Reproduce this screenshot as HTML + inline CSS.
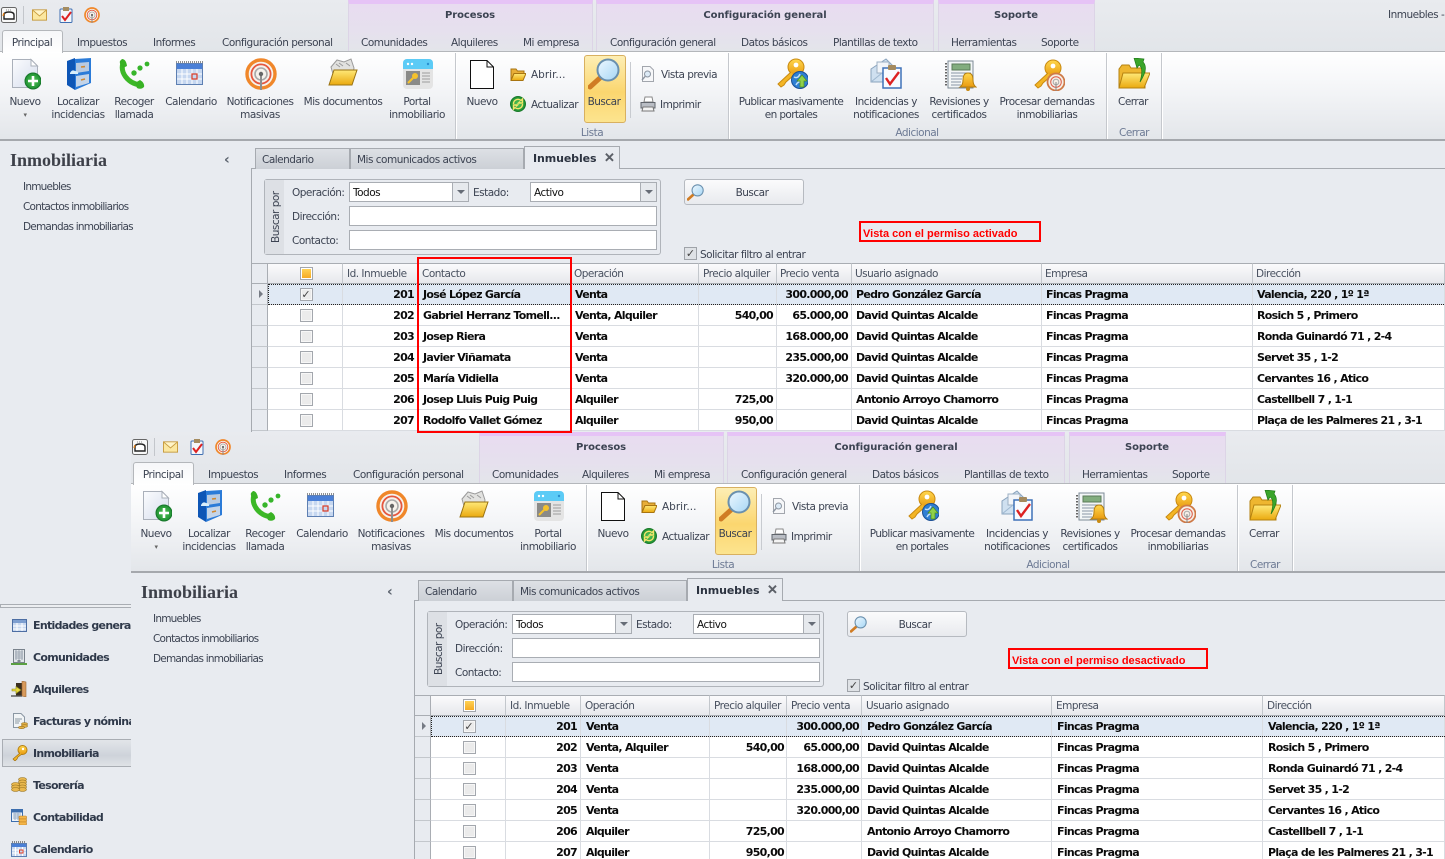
<!DOCTYPE html>
<html lang="es"><head><meta charset="utf-8"><title>Inmuebles</title>
<style>
html,body{margin:0;padding:0;width:1445px;height:859px;overflow:hidden;background:#e8ebf0}
body{position:relative;font:10.5px/14px "DejaVu Sans","Liberation Sans",sans-serif;letter-spacing:-.5px;color:#3c4352}
.w{position:absolute;overflow:hidden;background:#e8ebf0}
.t{position:absolute;white-space:nowrap;margin-top:3px}
.m{transform:translateX(-50%);text-align:center}
.g{font-weight:bold;font-size:10px;letter-spacing:-.08px}
.lk{letter-spacing:-.78px}
.tb{font-weight:bold;font-size:11px;letter-spacing:-.1px;color:#2c3340;z-index:3}
.cl{font-size:13px;font-weight:bold;-webkit-text-stroke:.6px #5c6068;color:#5c6068;z-index:3;letter-spacing:0}
.ch{font:bold 14px/14px "DejaVu Sans",sans-serif;color:#5e6570;letter-spacing:0}
svg.i{position:absolute;overflow:visible}
.bar{position:absolute;left:0;top:0;width:1445px;height:52px;background:linear-gradient(#e9ebef,#e2e5e9)}
.grp{position:absolute;top:0;height:51px;box-sizing:border-box;border-left:1px solid #dcd4e6;border-right:1px solid #dcd4e6;border-top:4px solid #e6c3f6;background:linear-gradient(#e8dcf0,#e6e0ee 55%,#e3e5ea)}
.rb{position:absolute;left:0;top:51px;width:1445px;height:90px;box-sizing:border-box;border-top:1px solid #b4b7bb;border-bottom:2px solid #a5a8ad;background:linear-gradient(#fff,#f6f7f9 35%,#e3e6ea)}
.sel{position:absolute;left:2px;top:30px;width:61px;height:23px;box-sizing:border-box;background:linear-gradient(#f6f7f9,#fff);border:1px solid #b4b7bb;border-bottom:0;border-radius:3px 3px 0 0}
.sep{position:absolute;top:53px;width:1px;height:86px;background:#c5c8cd;box-shadow:1px 0 0 #fff}
.hot{position:absolute;left:584px;top:55px;width:42px;height:68px;box-sizing:border-box;border:1px solid #d8b060;border-radius:3px;background:linear-gradient(#fdeeb4,#fbd66f 55%,#fce48f)}
.gl{color:#6d7a94}
.tab{position:absolute;top:148px;height:21px;box-sizing:border-box;border:1px solid #a6aab0;border-bottom:0;background:linear-gradient(#dde0e5,#ccd0d6)}
.tabs{position:absolute;left:524px;top:146px;width:96px;height:23px;box-sizing:border-box;border:1px solid #a6aab0;border-bottom:0;background:#e8ebf0;z-index:2}
.hl{position:absolute;left:252px;top:168px;width:1400px;height:1px;background:#a6aab0}
.vl{position:absolute;left:251px;top:168px;width:1px;height:300px;background:#a6aab0}
.gb{position:absolute;left:264px;top:179px;width:397px;height:76px;box-sizing:border-box;border:1px solid #b0b4ba;border-radius:3px;background:#e8ebf0}
.gs{position:absolute;left:0;top:0;width:19px;height:74px;background:#dde0e5}
.vt{position:absolute;left:270px;top:180px;height:75px;width:12px;line-height:12px;writing-mode:vertical-rl;transform:rotate(180deg);text-align:center;white-space:nowrap}
.in{position:absolute;box-sizing:border-box;height:20px;background:#fff;border:1px solid #a9adb3;padding:3px 3px 0;line-height:14px;color:#111}
.ar{position:absolute;top:182px;width:17px;height:20px;box-sizing:border-box;border:1px solid #a9adb3;background:#e6e9ed}
.ar:after{content:"";position:absolute;left:4px;top:7px;border:4px solid transparent;border-top:4px solid #666c76;border-bottom:0}
.btn{position:absolute;left:684px;top:179px;width:120px;height:26px;box-sizing:border-box;border:1px solid #b6bac0;border-radius:3px;background:linear-gradient(#fbfbfc,#e8eaee)}
.red{position:absolute;box-sizing:border-box;border:2px solid #f00;background:transparent;font:bold 11px/16px "Liberation Sans",sans-serif;letter-spacing:0;color:#f00;padding:3px 0 0 2px;white-space:nowrap}
.cb{position:absolute;left:684px;top:247px;width:13px;height:13px;box-sizing:border-box;border:1px solid #9fa3a9;background:#dfe2e6;color:#444;font:bold 11px/11px "DejaVu Sans",sans-serif;letter-spacing:0;text-align:center}
table{position:absolute;left:252px;top:263px;border-collapse:separate;border-spacing:0;table-layout:fixed;background:#fff;font:bold 11px/14px "DejaVu Sans",sans-serif;color:#0a0a0a;letter-spacing:-.7px}
th,td{box-sizing:border-box;height:21px;padding:2px 4px 0;border-right:1px solid #d9dce1;border-bottom:1px solid #d9dce1;overflow:hidden;white-space:nowrap;text-align:left}
th{font-weight:normal;font-size:10.5px;letter-spacing:-.5px;color:#48505f;padding-left:3px;padding-top:0;background:linear-gradient(#fbfbfc,#e6e8ec);border-top:1px solid #a9adb3;border-bottom:1px solid #a9adb3;border-right-color:#c3c7cc}
td.r{text-align:right;padding-right:3px}
td.x,th.x{background:#e8ebf0;border-right-color:#a9adb3;padding:0;border-bottom-color:#c3c7cc}
th.x{background:#e8ebf0;border-bottom-color:#a9adb3}
td.k{padding:0 0 0 2px;text-align:center}
th.k{padding:0 0 0 2px;text-align:center}
tr.s td{background:#e0e9f4}
tr.s td.x{background:#e8ebf0}
#t1 th:nth-child(3),#t1 th:nth-child(4),#t1 th:nth-child(6){padding-left:4px}
#t1 td:nth-child(4){padding-left:5px}
#t2 th{padding-left:4px}
#t2 td{padding-left:5px}
#t2 td.r{padding-right:2px}
#t2 td:nth-child(3){padding-right:3px}
#t2 td.x{padding-left:0}
#t2 td.k,#t2 th.k{padding-left:2px}
.c{display:inline-block;box-sizing:border-box;width:13px;height:13px;border:1px solid #a3a7ad;background:#ebebeb;box-shadow:inset 0 0 0 1px #f7f7f7;vertical-align:middle;color:#444;font:bold 11px/11px "DejaVu Sans",sans-serif;letter-spacing:0}
.co{background:linear-gradient(#ffd65a,#f5a61e);box-shadow:inset 0 0 0 1px #fff}
.dot{position:absolute;left:268px;top:284px;width:1300px;height:21px;box-sizing:border-box;border:1px dotted #222}
.tri{position:absolute;left:259px;top:290px;border:4px solid transparent;border-left:4px solid #767b84;border-right:0}
.nav{font:bold 11px/14px "DejaVu Sans",sans-serif;letter-spacing:-.7px;color:#2f394a;margin-top:1px}
.ti{margin-top:0;font:bold 18px/20px "Liberation Serif",serif;letter-spacing:0;color:#3d4049}
</style></head><body>
<svg width="0" height="0" style="position:absolute"><defs>
<linearGradient id="gy" x1="0" y1="0" x2="0" y2="1"><stop offset="0" stop-color="#ffe978"/><stop offset="1" stop-color="#eaa90e"/></linearGradient>
<linearGradient id="gk" x1="0" y1="0" x2="0" y2="1"><stop offset="0" stop-color="#ffd84e"/><stop offset="1" stop-color="#e99a10"/></linearGradient>
<linearGradient id="gp" x1="0" y1="0" x2="1" y2="1"><stop offset="0" stop-color="#fbfcfe"/><stop offset="1" stop-color="#d5dcec"/></linearGradient>
<linearGradient id="gl" x1="0" y1="0" x2="1" y2="1"><stop offset="0" stop-color="#eef8ff"/><stop offset="1" stop-color="#a6d6f5"/></linearGradient>
<radialGradient id="gg"><stop offset="0" stop-color="#58c95c"/><stop offset="1" stop-color="#1d8f31"/></radialGradient>
<symbol id="new" viewBox="0 0 32 32"><path d="M3.5 1.5H22L28.5 8V29.5H3.5Z" fill="url(#gp)" stroke="#aab0ba"/><path d="M22 1.5V8H28.5Z" fill="#fff" stroke="#aab0ba"/><circle cx="24" cy="23" r="8" fill="url(#gg)" stroke="#17772b"/><path d="M24 18V28M19 23H29" stroke="#fff" stroke-width="2.6"/></symbol>
<symbol id="cab" viewBox="0 0 32 32"><path d="M5 3L13 0V32L5 27Z" fill="#0e56b6"/><path d="M13 1L29 0V25L13 32Z" fill="#2b7bd8"/><path d="M14 5L27 4V13L14 15Z" fill="#b9cbe2"/><path d="M14 18L27 16V25L14 29Z" fill="#c4d4e8"/><path d="M19 9L23 8.6M19 22L23 21" stroke="#d08830" stroke-width="1.6"/><path d="M8 15q2-4 5-2q4 0 3 3H8z" fill="#d8eefb"/></symbol>
<symbol id="ph" viewBox="0 0 32 32"><path d="M5 5C2 14 9 25 22 27" fill="none" stroke="#3cb827" stroke-width="5"/><path d="M4 1Q8 1 9 8L5 10Q1 6 2 3ZM17 25L22 22Q27 25 26 29Q23 32 19 30Z" fill="#38b224"/><circle cx="16" cy="15" r="2.7" fill="#37b52b"/><circle cx="22" cy="10" r="2.6" fill="#37b52b"/><circle cx="29" cy="6" r="2.4" fill="#37b52b"/></symbol>
<symbol id="cal" viewBox="0 0 32 32"><rect x="2.5" y="5.5" width="26" height="21" fill="#c6d7f0" stroke="#5d7fb2"/><rect x="3" y="6" width="25" height="5" fill="#4a7fd6"/><path d="M2 4H29" stroke="#222" stroke-dasharray="1 1"/><path d="M3 16H28M3 21H28M8 11V26M13 11V26M18 11V26M23 11V26" stroke="#fff"/><rect x="18" y="16" width="5" height="5" fill="none" stroke="#dc3b24" stroke-width="1.2"/></symbol>
<symbol id="not" viewBox="0 0 32 32"><circle cx="16" cy="16" r="14" fill="#f6f2ec" stroke="#f0872a" stroke-width="3.4"/><circle cx="16" cy="16" r="9.6" fill="none" stroke="#e5573f" stroke-width="1.8"/><circle cx="16" cy="16" r="6" fill="none" stroke="#a9a9a9" stroke-width="1.6"/><path d="M16 16V32" stroke="#8e8e8e" stroke-width="2"/><circle cx="16" cy="16" r="2.2" fill="#666"/></symbol>
<symbol id="doc" viewBox="0 0 32 32"><path d="M4 9L10 2L17 4L24 1L27 10L26 16H6Z" fill="#e2e2e0" stroke="#9a9a9a"/><path d="M9 6L13 9M12 5L16 8M19 5L23 8" stroke="#9a9a9a"/><path d="M7 12H30L25 27H2Z" fill="url(#gy)" stroke="#9a7312"/></symbol>
<symbol id="por" viewBox="0 0 32 32"><rect x="1" y="1" width="30" height="30" rx="4" fill="#e4e4e4"/><path d="M1 11V5a4 4 0 0 1 4-4H27a4 4 0 0 1 4 4V11Z" fill="#5ccbf6"/><circle cx="6" cy="6" r="1.2" fill="#fff"/><circle cx="10" cy="6" r="1.2" fill="#fff"/><circle cx="26" cy="6" r="1.2" fill="#2a8fcf"/><rect x="4" y="13" width="14" height="14" fill="#8a8a88"/><circle cx="13" cy="18" r="3" fill="#f5c22c"/><path d="M11 20L6 25" stroke="#f5c22c" stroke-width="2"/><path d="M20 15H28M20 18H28M20 21H28M20 24H28" stroke="#9c9c9c"/></symbol>
<symbol id="bla" viewBox="0 0 32 32"><path d="M4.5 2.5H21L27.5 9V30.5H4.5Z" fill="#fff" stroke="#111"/><path d="M21 2.5V9H27.5" fill="none" stroke="#111"/></symbol>
<symbol id="fld" viewBox="0 0 16 16"><path d="M1 3H6L7.5 5H14V8H4L1 14Z" fill="#e8ae38" stroke="#a87410"/><path d="M4 7.5H16L13 14.5H1Z" fill="url(#gy)" stroke="#a87410"/></symbol>
<symbol id="ref" viewBox="0 0 16 16"><circle cx="8" cy="8" r="7.5" fill="url(#gg)" stroke="#1a7a2a"/><path d="M3.5 8A4.5 4.5 0 0 1 11 4.5L12.5 3V7H8.5L10 5.5" fill="none" stroke="#f3e56a" stroke-width="1.4"/><path d="M12.5 8A4.5 4.5 0 0 1 5 11.5L3.5 13V9H7.5L6 10.5" fill="none" stroke="#f3e56a" stroke-width="1.4"/></symbol>
<symbol id="mag" viewBox="0 0 32 32"><path d="M13 19L2 29" stroke="#d07c24" stroke-width="5" stroke-linecap="round"/><circle cx="20" cy="12" r="10.5" fill="url(#gl)" stroke="#6a90ae" stroke-width="2"/></symbol>
<symbol id="pre" viewBox="0 0 16 16"><path d="M2.5.5H10L13.5 4V15.5H2.5Z" fill="#f6f7f9" stroke="#a2a6ad"/><circle cx="7.5" cy="8" r="3" fill="#dceaf6" stroke="#8b94a0"/><path d="M5 10.5L2 14" stroke="#8b94a0" stroke-width="1.4"/></symbol>
<symbol id="pri" viewBox="0 0 16 16"><path d="M5 1H12L13 6H4Z" fill="#fff" stroke="#888"/><path d="M1 6.5H15V12H1Z" fill="#b9bdc4" stroke="#60656c"/><path d="M3 11H13L14 15H2Z" fill="#f4f4f4" stroke="#777"/></symbol>
<symbol id="key" viewBox="0 0 32 32"><circle cx="20" cy="9" r="8" fill="url(#gk)" stroke="#c98a10"/><circle cx="20" cy="7" r="2.4" fill="#fff"/><path d="M15 14L2 26L5 29L8 27L10 24L18 17" fill="#f3b525" stroke="#c98a10"/></symbol>
<symbol id="keg" viewBox="0 0 32 32"><use href="#key"/><circle cx="24" cy="22" r="8.5" fill="#2f7fd3" stroke="#1b4f94"/><path d="M18 19q4 2 6-3M20 27q2-4 6-3" fill="none" stroke="#bfe0fa" stroke-width="1.5"/><path d="M26 17L31 23H28V29H24V23H21Z" fill="#8fd14a" stroke="#4b8d1c" stroke-width=".7"/></symbol>
<symbol id="ket" viewBox="0 0 32 32"><use href="#key"/><circle cx="23" cy="23" r="8.5" fill="#f5eee6" stroke="#ce7a48" stroke-width="1.8"/><circle cx="23" cy="23" r="5.3" fill="none" stroke="#dd5c48"/><circle cx="23" cy="23" r="2.8" fill="none" stroke="#a9a9a9"/><path d="M23 23V32" stroke="#888"/></symbol>
<symbol id="inc" viewBox="0 0 32 32"><path d="M1 11L16 1L23 8V24H1Z" fill="#cfe0f0" stroke="#8aa3bd"/><rect x="7" y="4" width="12" height="11" fill="#f2f5f9" stroke="#9cb0c4"/><path d="M1 24L12 15L22 24" fill="none" stroke="#9fb8d0"/><rect x="13" y="10" width="18" height="20" fill="#f8fbff" stroke="#3f72b8" stroke-width="1.5"/><rect x="18" y="7" width="8" height="5" rx="1" fill="#a48a5e"/><path d="M16 20L20 26L29 14" fill="none" stroke="#dd2222" stroke-width="2.4"/></symbol>
<symbol id="rev" viewBox="0 0 32 32"><rect x="3" y="1" width="25" height="27" fill="#f3f6f7" stroke="#7c8a96"/><path d="M1 3v23" stroke="#666" stroke-dasharray="1.5 1.5" stroke-width="2"/><rect x="7" y="4" width="18" height="6" fill="#82ad7e" stroke="#5b7b58"/><path d="M6 13H26M6 16H18M6 19H17M6 22H16M6 25H16" stroke="#8a97a6"/><path d="M23 13q5 0 5 7q0 5 3 7H15q3-2 3-7q0-7 5-7Z" fill="url(#gk)" stroke="#b57f10"/><circle cx="23" cy="29" r="2" fill="#c98a10"/></symbol>
<symbol id="cer" viewBox="0 0 32 32"><path d="M1 11L4 7H11L13 10H27V30H1Z" fill="#eeb630" stroke="#b58210"/><path d="M5 15H32L26 30H1Z" fill="url(#gy)" stroke="#b58210"/><path d="M16 0L26 1L25 4Q31 10 22 24Q26 10 21 7L19 10Z" fill="#3aa52a" stroke="#1e7a18" stroke-width=".7"/></symbol>
<symbol id="q1" viewBox="0 0 16 16"><rect x=".5" y=".5" width="15" height="15" rx="2" fill="#f8f8f8" stroke="#666"/><path d="M3 8Q3 5 8 5T13 8V12H3Z" fill="#fff" stroke="#222" stroke-width="1.4"/><path d="M3 6L2 9" stroke="#e0801a" stroke-width="1.4"/><path d="M5 3H11" stroke="#888" stroke-dasharray="1 1"/></symbol>
<symbol id="mai" viewBox="0 0 16 12"><rect x=".5" y=".5" width="15" height="11" fill="#fbe7a0" stroke="#c69a3e"/><path d="M1 1L8 7L15 1" fill="#fff4c8" stroke="#c69a3e"/></symbol>
<symbol id="clp" viewBox="0 0 14 16"><rect x="1" y="2" width="12" height="13.5" rx="1" fill="#f4f7fb" stroke="#3f6fb2"/><rect x="4" y="0" width="6" height="4" fill="#a58c60"/><path d="M3 9L6 13L12 5" fill="none" stroke="#dd2222" stroke-width="2"/></symbol>
<symbol id="s1" viewBox="0 0 16 16"><rect x=".5" y="2.5" width="14" height="12" fill="#c9d8ef" stroke="#4d6ea3"/><rect x="1" y="3" width="13" height="3" fill="#7e9fd0"/><path d="M1 9H14M1 12H14M5 6V14M10 6V14" stroke="#fff"/></symbol>
<symbol id="s2" viewBox="0 0 16 16"><rect x="2.5" y=".5" width="11" height="13" fill="#e2e6ea" stroke="#79828c"/><path d="M4 3H12M4 5H12M4 7H12M4 9H12M5 1V11M8 1V11M11 1V11" stroke="#9fa8b4"/><rect x="6.5" y="11" width="3" height="3" fill="#7f8890"/><path d="M0 15H16" stroke="#5a9f42" stroke-width="2"/></symbol>
<symbol id="s3" viewBox="0 0 16 16"><rect x="5" y="2" width="9" height="13" fill="#3a2e20"/><path d="M11 0L15 1V16L11 15Z" fill="#d89a5c" stroke="#9c6a38" stroke-width=".6"/><path d="M1 8H5V5.5L10 9L5 12.5V10H1Z" fill="#e8d93f" stroke="#8f8a1a" stroke-width=".6"/><path d="M0 15H11" stroke="#555" stroke-width="1.4"/></symbol>
<symbol id="s4" viewBox="0 0 16 16"><path d="M1.5.5H9L12.5 4V14.5H1.5Z" fill="#f1f4f6" stroke="#8b97a3"/><path d="M3 6H10M3 8H8M3 10H7" stroke="#8b97a3"/><ellipse cx="12.5" cy="11" rx="3" ry="1.3" fill="#e6b245" stroke="#9c7520" stroke-width=".6"/><ellipse cx="12.5" cy="13" rx="3" ry="1.3" fill="#e6b245" stroke="#9c7520" stroke-width=".6"/><ellipse cx="9.5" cy="14.5" rx="3" ry="1.2" fill="#e6b245" stroke="#9c7520" stroke-width=".6"/></symbol>
<symbol id="s5" viewBox="0 0 16 16"><circle cx="10.5" cy="5" r="4.5" fill="url(#gk)" stroke="#b57f10"/><circle cx="11" cy="4" r="1.2" fill="#fff"/><path d="M8 8L1 14L3 16L5 14L6 12L10 9" fill="#f3b525" stroke="#a06f10" stroke-width=".7"/></symbol>
<symbol id="s6" viewBox="0 0 16 16"><g fill="#e9b84e" stroke="#94701f" stroke-width=".6"><ellipse cx="11.5" cy="2.5" rx="4" ry="2"/><ellipse cx="11.5" cy="5" rx="4" ry="2"/><ellipse cx="11.5" cy="7.5" rx="4" ry="2"/><ellipse cx="11.5" cy="10" rx="4" ry="2"/><ellipse cx="11.5" cy="12.5" rx="4" ry="2"/><ellipse cx="4.5" cy="7.5" rx="4" ry="2"/><ellipse cx="4.5" cy="10" rx="4" ry="2"/><ellipse cx="4.5" cy="12.5" rx="4" ry="2"/></g></symbol>
<symbol id="s7" viewBox="0 0 16 16"><rect x=".5" y=".5" width="11" height="12" fill="#eef3f9" stroke="#3c6eae"/><rect x="1" y="1" width="10" height="2.5" fill="#3c6eae"/><path d="M2 5H10M2 7H10M2 9H10M4 4V11M7 4V11" stroke="#9cb0c8"/><rect x="8" y="7" width="7.5" height="3" rx="1" fill="#f4b64a" stroke="#c07d1c" stroke-width=".6"/><rect x="8" y="10" width="7.5" height="3" rx="1" fill="#f4b64a" stroke="#c07d1c" stroke-width=".6"/><rect x="8" y="13" width="7.5" height="3" rx="1" fill="#f4b64a" stroke="#c07d1c" stroke-width=".6"/></symbol>
<symbol id="s8" viewBox="0 0 16 16"><rect x=".5" y="2.5" width="15" height="13" fill="#c9d8ef" stroke="#5d7fb2"/><rect x="1" y="3" width="14" height="3" fill="#4a7fd6"/><path d="M1 1H15" stroke="#222" stroke-dasharray="1 1"/><path d="M1 9H15M1 12H15M4.5 6V15M8 6V15M11.5 6V15" stroke="#fff"/><rect x="8.5" y="9" width="3.5" height="3" fill="none" stroke="#dc3b24"/></symbol>
</defs></svg>

<!-- WINDOW 1 -->
<div class="w" style="left:0;top:0;width:1445px;height:432px">
<div class="bar"></div>
<div class="grp" style="left:348px;width:245px"></div><div class="grp" style="left:596px;width:338px"></div><div class="grp" style="left:938px;width:157px"></div>
<div class="t m g" style="left:470px;top:6px">Procesos</div><div class="t m g" style="left:765px;top:6px">Configuración general</div><div class="t m g" style="left:1016px;top:6px">Soporte</div>
<div class="t" style="left:1388px;top:5px">Inmuebles - Fincas</div>
<svg class="i" style="left:1px;top:7px;width:16px;height:16px"><use href="#q1"/></svg><div style="position:absolute;left:23px;top:6px;width:1px;height:18px;background:#c3c6cb"></div>
<svg class="i" style="left:32px;top:9px;width:15px;height:12px"><use href="#mai"/></svg><svg class="i" style="left:59px;top:7px;width:14px;height:16px"><use href="#clp"/></svg><svg class="i" style="left:84px;top:7px;width:16px;height:16px"><use href="#not"/></svg>
<div class="rb"></div><div class="sel"></div>
<div class="t m" style="left:32px;top:33px">Principal</div><div class="t" style="left:77px;top:33px">Impuestos</div><div class="t" style="left:153px;top:33px">Informes</div><div class="t" style="left:222px;top:33px">Configuración personal</div><div class="t" style="left:361px;top:33px">Comunidades</div><div class="t" style="left:451px;top:33px">Alquileres</div><div class="t" style="left:523px;top:33px">Mi empresa</div><div class="t" style="left:610px;top:33px">Configuración general</div><div class="t" style="left:741px;top:33px">Datos básicos</div><div class="t" style="left:833px;top:33px">Plantillas de texto</div><div class="t" style="left:951px;top:33px">Herramientas</div><div class="t" style="left:1041px;top:33px">Soporte</div>
<div class="sep" style="left:455px"></div><div class="sep" style="left:728px"></div><div class="sep" style="left:1106px"></div><div class="sep" style="left:1161px"></div>
<div class="hot"></div><div style="position:absolute;left:630px;top:62px;width:1px;height:56px;background:#c8cbd0"></div>
<svg class="i" style="left:9px;top:58px;width:32px;height:32px"><use href="#new"/></svg><svg class="i" style="left:62px;top:58px;width:32px;height:32px"><use href="#cab"/></svg><svg class="i" style="left:118px;top:58px;width:32px;height:32px"><use href="#ph"/></svg><svg class="i" style="left:174px;top:58px;width:32px;height:32px"><use href="#cal"/></svg><svg class="i" style="left:245px;top:58px;width:32px;height:32px"><use href="#not"/></svg><svg class="i" style="left:327px;top:58px;width:32px;height:32px"><use href="#doc"/></svg><svg class="i" style="left:402px;top:58px;width:32px;height:32px"><use href="#por"/></svg><svg class="i" style="left:466px;top:58px;width:32px;height:32px"><use href="#bla"/></svg>
<svg class="i" style="left:510px;top:66px;width:16px;height:16px"><use href="#fld"/></svg><svg class="i" style="left:510px;top:96px;width:16px;height:16px"><use href="#ref"/></svg><svg class="i" style="left:588px;top:58px;width:32px;height:32px"><use href="#mag"/></svg><svg class="i" style="left:640px;top:66px;width:16px;height:16px"><use href="#pre"/></svg><svg class="i" style="left:640px;top:96px;width:16px;height:16px"><use href="#pri"/></svg>
<svg class="i" style="left:776px;top:58px;width:32px;height:32px"><use href="#keg"/></svg><svg class="i" style="left:870px;top:58px;width:32px;height:32px"><use href="#inc"/></svg><svg class="i" style="left:945px;top:60px;width:32px;height:32px"><use href="#rev"/></svg><svg class="i" style="left:1033px;top:59px;width:32px;height:32px"><use href="#ket"/></svg><svg class="i" style="left:1118px;top:58px;width:32px;height:32px"><use href="#cer"/></svg>
<div class="t m" style="left:25px;top:92px">Nuevo</div><div class="t m" style="left:25px;top:105px;font-size:7px;color:#666">▾</div><div class="t m" style="left:78px;top:92px">Localizar<br><span style="position:relative;top:-1px">incidencias</span></div><div class="t m" style="left:134px;top:92px">Recoger<br><span style="position:relative;top:-1px">llamada</span></div><div class="t m" style="left:191px;top:92px">Calendario</div><div class="t m" style="left:260px;top:92px">Notificaciones<br><span style="position:relative;top:-1px">masivas</span></div><div class="t m" style="left:343px;top:92px">Mis documentos</div><div class="t m" style="left:417px;top:92px">Portal<br><span style="position:relative;top:-1px">inmobiliario</span></div>
<div class="t m" style="left:482px;top:92px">Nuevo</div><div class="t" style="left:531px;top:65px;letter-spacing:0">Abrir...</div><div class="t" style="left:531px;top:95px">Actualizar</div><div class="t m" style="left:604px;top:92px">Buscar</div><div class="t" style="left:661px;top:65px">Vista previa</div><div class="t" style="left:660px;top:95px">Imprimir</div><div class="t m gl" style="left:592px;top:123px">Lista</div>
<div class="t m" style="left:791px;top:92px;letter-spacing:-.62px">Publicar masivamente<br><span style="position:relative;top:-1px">en portales</span></div><div class="t m" style="left:886px;top:92px">Incidencias y<br><span style="position:relative;top:-1px">notificaciones</span></div><div class="t m" style="left:959px;top:92px">Revisiones y<br><span style="position:relative;top:-1px">certificados</span></div><div class="t m" style="left:1047px;top:92px">Procesar demandas<br><span style="position:relative;top:-1px">inmobiliarias</span></div><div class="t m gl" style="left:917px;top:123px">Adicional</div><div class="t m" style="left:1133px;top:92px">Cerrar</div><div class="t m gl" style="left:1134px;top:123px">Cerrar</div>
<div class="t ti" style="left:10px;top:150px">Inmobiliaria</div><div class="t ch" style="left:224px;top:150px">‹</div>
<div class="t lk" style="left:23px;top:177px">Inmuebles</div><div class="t lk" style="left:23px;top:197px">Contactos inmobiliarios</div><div class="t lk" style="left:23px;top:217px">Demandas inmobiliarias</div>

<div class="hl"></div><div class="vl"></div>
<div class="tab" style="left:255px;width:95px"></div><div class="tab" style="left:350px;width:174px"></div><div class="tabs"></div>
<div class="t" style="left:262px;top:150px">Calendario</div><div class="t" style="left:357px;top:150px">Mis comunicados activos</div><div class="t tb" style="left:533px;top:149px">Inmuebles</div><div class="t cl" style="left:604px;top:149px">✕</div>
<div class="gb"><div class="gs"></div></div><div class="vt">Buscar por</div>
<div class="t" style="left:292px;top:183px">Operación:</div><div class="t" style="left:292px;top:207px">Dirección:</div><div class="t" style="left:292px;top:231px">Contacto:</div><div class="t" style="left:473px;top:183px">Estado:</div>
<div class="in" style="left:349px;top:182px;width:104px">Todos</div><div class="ar" style="left:452px"></div><div class="in" style="left:530px;top:182px;width:111px">Activo</div><div class="ar" style="left:640px"></div>
<div class="in" style="left:349px;top:206px;width:308px"></div><div class="in" style="left:349px;top:230px;width:308px"></div>
<div class="btn"></div><svg class="i" style="left:687px;top:184px;width:17px;height:17px"><use href="#mag"/></svg><div class="t m" style="left:752px;top:183px">Buscar</div>
<div class="cb">✓</div><div class="t" style="left:700px;top:245px">Solicitar filtro al entrar</div>
<div class="red" style="left:859px;top:221px;width:182px;height:21px">Vista con el permiso activado</div>
<table id="t1" style="width:1193px"><colgroup><col style="width:16px"><col style="width:75px"><col style="width:75px"><col style="width:153px"><col style="width:128px"><col style="width:78px"><col style="width:75px"><col style="width:190px"><col style="width:211px"><col style="width:192px"></colgroup>
<tr><th class="x"></th><th class="k"><span class="c co"></span></th><th>Id. Inmueble</th><th>Contacto</th><th>Operación</th><th>Precio alquiler</th><th>Precio venta</th><th>Usuario asignado</th><th>Empresa</th><th>Dirección</th></tr>
<tr class="s"><td class="x"></td><td class="k"><span class="c">✓</span></td><td class="r">201</td><td>José López García</td><td>Venta</td><td class="r"></td><td class="r">300.000,00</td><td>Pedro González García</td><td>Fincas Pragma</td><td>Valencia, 220 , 1º 1ª</td></tr>
<tr><td class="x"></td><td class="k"><span class="c"></span></td><td class="r">202</td><td>Gabriel Herranz Tomell...</td><td>Venta, Alquiler</td><td class="r">540,00</td><td class="r">65.000,00</td><td>David Quintas Alcalde</td><td>Fincas Pragma</td><td>Rosich 5 , Primero</td></tr>
<tr><td class="x"></td><td class="k"><span class="c"></span></td><td class="r">203</td><td>Josep Riera</td><td>Venta</td><td class="r"></td><td class="r">168.000,00</td><td>David Quintas Alcalde</td><td>Fincas Pragma</td><td>Ronda Guinardó 71 , 2-4</td></tr>
<tr><td class="x"></td><td class="k"><span class="c"></span></td><td class="r">204</td><td>Javier Viñamata</td><td>Venta</td><td class="r"></td><td class="r">235.000,00</td><td>David Quintas Alcalde</td><td>Fincas Pragma</td><td>Servet 35 , 1-2</td></tr>
<tr><td class="x"></td><td class="k"><span class="c"></span></td><td class="r">205</td><td>María Vidiella</td><td>Venta</td><td class="r"></td><td class="r">320.000,00</td><td>David Quintas Alcalde</td><td>Fincas Pragma</td><td>Cervantes 16 , Atico</td></tr>
<tr><td class="x"></td><td class="k"><span class="c"></span></td><td class="r">206</td><td>Josep Lluis Puig Puig</td><td>Alquiler</td><td class="r">725,00</td><td class="r"></td><td>Antonio Arroyo Chamorro</td><td>Fincas Pragma</td><td>Castellbell 7 , 1-1</td></tr>
<tr><td class="x"></td><td class="k"><span class="c"></span></td><td class="r">207</td><td>Rodolfo Vallet Gómez</td><td>Alquiler</td><td class="r">950,00</td><td class="r"></td><td>David Quintas Alcalde</td><td>Fincas Pragma</td><td>Plaça de les Palmeres 21 , 3-1</td></tr>
</table>
<div class="dot"></div><div class="tri"></div>
</div>

<!-- LEFT NAV -->
<div style="position:absolute;left:0;top:432px;width:131px;height:427px;overflow:hidden;background:#e8ebf0">
<div style="position:absolute;left:0;top:172px;width:140px;height:4px;box-sizing:border-box;border:1px solid #a9adb3;background:#eceef1"></div>
<div style="position:absolute;left:2px;top:307px;width:140px;height:28px;box-sizing:border-box;border:1px solid #a9adb3;background:linear-gradient(#e2e5e9,#ced3da 60%,#dfe2e6)"></div>
<svg class="i" style="left:12px;top:185px;width:16px;height:16px"><use href="#s1"/></svg><svg class="i" style="left:11px;top:217px;width:16px;height:16px"><use href="#s2"/></svg><svg class="i" style="left:11px;top:249px;width:16px;height:16px"><use href="#s3"/></svg><svg class="i" style="left:12px;top:281px;width:16px;height:16px"><use href="#s4"/></svg><svg class="i" style="left:12px;top:313px;width:16px;height:16px"><use href="#s5"/></svg><svg class="i" style="left:11px;top:345px;width:16px;height:16px"><use href="#s6"/></svg><svg class="i" style="left:11px;top:377px;width:16px;height:16px"><use href="#s7"/></svg><svg class="i" style="left:11px;top:409px;width:16px;height:16px"><use href="#s8"/></svg>
<div class="t nav" style="left:33px;top:186px">Entidades generales</div><div class="t nav" style="left:33px;top:218px">Comunidades</div><div class="t nav" style="left:33px;top:250px">Alquileres</div><div class="t nav" style="left:33px;top:282px">Facturas y nóminas</div><div class="t nav" style="left:33px;top:314px">Inmobiliaria</div><div class="t nav" style="left:33px;top:346px">Tesorería</div><div class="t nav" style="left:33px;top:378px">Contabilidad</div><div class="t nav" style="left:33px;top:410px">Calendario</div>
</div>

<!-- WINDOW 2 -->
<div class="w" style="left:131px;top:432px;width:1314px;height:427px">
<div class="bar"></div>
<div class="grp" style="left:348px;width:245px"></div><div class="grp" style="left:596px;width:338px"></div><div class="grp" style="left:938px;width:157px"></div>
<div class="t m g" style="left:470px;top:6px">Procesos</div><div class="t m g" style="left:765px;top:6px">Configuración general</div><div class="t m g" style="left:1016px;top:6px">Soporte</div>
<svg class="i" style="left:1px;top:7px;width:16px;height:16px"><use href="#q1"/></svg><div style="position:absolute;left:23px;top:6px;width:1px;height:18px;background:#c3c6cb"></div>
<svg class="i" style="left:32px;top:9px;width:15px;height:12px"><use href="#mai"/></svg><svg class="i" style="left:59px;top:7px;width:14px;height:16px"><use href="#clp"/></svg><svg class="i" style="left:84px;top:7px;width:16px;height:16px"><use href="#not"/></svg>
<div class="rb"></div><div class="sel"></div>
<div class="t m" style="left:32px;top:33px">Principal</div><div class="t" style="left:77px;top:33px">Impuestos</div><div class="t" style="left:153px;top:33px">Informes</div><div class="t" style="left:222px;top:33px">Configuración personal</div><div class="t" style="left:361px;top:33px">Comunidades</div><div class="t" style="left:451px;top:33px">Alquileres</div><div class="t" style="left:523px;top:33px">Mi empresa</div><div class="t" style="left:610px;top:33px">Configuración general</div><div class="t" style="left:741px;top:33px">Datos básicos</div><div class="t" style="left:833px;top:33px">Plantillas de texto</div><div class="t" style="left:951px;top:33px">Herramientas</div><div class="t" style="left:1041px;top:33px">Soporte</div>
<div class="sep" style="left:455px"></div><div class="sep" style="left:728px"></div><div class="sep" style="left:1106px"></div><div class="sep" style="left:1161px"></div>
<div class="hot"></div><div style="position:absolute;left:630px;top:62px;width:1px;height:56px;background:#c8cbd0"></div>
<svg class="i" style="left:9px;top:58px;width:32px;height:32px"><use href="#new"/></svg><svg class="i" style="left:62px;top:58px;width:32px;height:32px"><use href="#cab"/></svg><svg class="i" style="left:118px;top:58px;width:32px;height:32px"><use href="#ph"/></svg><svg class="i" style="left:174px;top:58px;width:32px;height:32px"><use href="#cal"/></svg><svg class="i" style="left:245px;top:58px;width:32px;height:32px"><use href="#not"/></svg><svg class="i" style="left:327px;top:58px;width:32px;height:32px"><use href="#doc"/></svg><svg class="i" style="left:402px;top:58px;width:32px;height:32px"><use href="#por"/></svg><svg class="i" style="left:466px;top:58px;width:32px;height:32px"><use href="#bla"/></svg>
<svg class="i" style="left:510px;top:66px;width:16px;height:16px"><use href="#fld"/></svg><svg class="i" style="left:510px;top:96px;width:16px;height:16px"><use href="#ref"/></svg><svg class="i" style="left:588px;top:58px;width:32px;height:32px"><use href="#mag"/></svg><svg class="i" style="left:640px;top:66px;width:16px;height:16px"><use href="#pre"/></svg><svg class="i" style="left:640px;top:96px;width:16px;height:16px"><use href="#pri"/></svg>
<svg class="i" style="left:776px;top:58px;width:32px;height:32px"><use href="#keg"/></svg><svg class="i" style="left:870px;top:58px;width:32px;height:32px"><use href="#inc"/></svg><svg class="i" style="left:945px;top:60px;width:32px;height:32px"><use href="#rev"/></svg><svg class="i" style="left:1033px;top:59px;width:32px;height:32px"><use href="#ket"/></svg><svg class="i" style="left:1118px;top:58px;width:32px;height:32px"><use href="#cer"/></svg>
<div class="t m" style="left:25px;top:92px">Nuevo</div><div class="t m" style="left:25px;top:105px;font-size:7px;color:#666">▾</div><div class="t m" style="left:78px;top:92px">Localizar<br><span style="position:relative;top:-1px">incidencias</span></div><div class="t m" style="left:134px;top:92px">Recoger<br><span style="position:relative;top:-1px">llamada</span></div><div class="t m" style="left:191px;top:92px">Calendario</div><div class="t m" style="left:260px;top:92px">Notificaciones<br><span style="position:relative;top:-1px">masivas</span></div><div class="t m" style="left:343px;top:92px">Mis documentos</div><div class="t m" style="left:417px;top:92px">Portal<br><span style="position:relative;top:-1px">inmobiliario</span></div>
<div class="t m" style="left:482px;top:92px">Nuevo</div><div class="t" style="left:531px;top:65px;letter-spacing:0">Abrir...</div><div class="t" style="left:531px;top:95px">Actualizar</div><div class="t m" style="left:604px;top:92px">Buscar</div><div class="t" style="left:661px;top:65px">Vista previa</div><div class="t" style="left:660px;top:95px">Imprimir</div><div class="t m gl" style="left:592px;top:123px">Lista</div>
<div class="t m" style="left:791px;top:92px;letter-spacing:-.62px">Publicar masivamente<br><span style="position:relative;top:-1px">en portales</span></div><div class="t m" style="left:886px;top:92px">Incidencias y<br><span style="position:relative;top:-1px">notificaciones</span></div><div class="t m" style="left:959px;top:92px">Revisiones y<br><span style="position:relative;top:-1px">certificados</span></div><div class="t m" style="left:1047px;top:92px">Procesar demandas<br><span style="position:relative;top:-1px">inmobiliarias</span></div><div class="t m gl" style="left:917px;top:123px">Adicional</div><div class="t m" style="left:1133px;top:92px">Cerrar</div><div class="t m gl" style="left:1134px;top:123px">Cerrar</div>
<div class="t ti" style="left:10px;top:150px">Inmobiliaria</div>
<div class="t lk" style="left:22px;top:177px">Inmuebles</div><div class="t lk" style="left:22px;top:197px">Contactos inmobiliarios</div><div class="t lk" style="left:22px;top:217px">Demandas inmobiliarias</div>
<div style="position:absolute;left:32px;top:0;width:1282px;height:427px">
<div class="t ch" style="left:224px;top:150px">‹</div>
<div class="hl"></div><div class="vl"></div>
<div class="tab" style="left:255px;width:95px"></div><div class="tab" style="left:350px;width:174px"></div><div class="tabs"></div>
<div class="t" style="left:262px;top:150px">Calendario</div><div class="t" style="left:357px;top:150px">Mis comunicados activos</div><div class="t tb" style="left:533px;top:149px">Inmuebles</div><div class="t cl" style="left:604px;top:149px">✕</div>
<div class="gb"><div class="gs"></div></div><div class="vt">Buscar por</div>
<div class="t" style="left:292px;top:183px">Operación:</div><div class="t" style="left:292px;top:207px">Dirección:</div><div class="t" style="left:292px;top:231px">Contacto:</div><div class="t" style="left:473px;top:183px">Estado:</div>
<div class="in" style="left:349px;top:182px;width:104px">Todos</div><div class="ar" style="left:452px"></div><div class="in" style="left:530px;top:182px;width:111px">Activo</div><div class="ar" style="left:640px"></div>
<div class="in" style="left:349px;top:206px;width:308px"></div><div class="in" style="left:349px;top:230px;width:308px"></div>
<div class="btn"></div><svg class="i" style="left:687px;top:184px;width:17px;height:17px"><use href="#mag"/></svg><div class="t m" style="left:752px;top:183px">Buscar</div>
<div class="cb">✓</div><div class="t" style="left:700px;top:245px">Solicitar filtro al entrar</div>
<div class="red" style="left:845px;top:216px;width:200px;height:21px">Vista con el permiso desactivado</div>
<table id="t2" style="width:1030px"><colgroup><col style="width:16px"><col style="width:75px"><col style="width:75px"><col style="width:129px"><col style="width:77px"><col style="width:75px"><col style="width:190px"><col style="width:211px"><col style="width:182px"></colgroup>
<tr><th class="x"></th><th class="k"><span class="c co"></span></th><th>Id. Inmueble</th><th>Operación</th><th>Precio alquiler</th><th>Precio venta</th><th>Usuario asignado</th><th>Empresa</th><th>Dirección</th></tr>
<tr class="s"><td class="x"></td><td class="k"><span class="c">✓</span></td><td class="r">201</td><td>Venta</td><td class="r"></td><td class="r">300.000,00</td><td>Pedro González García</td><td>Fincas Pragma</td><td>Valencia, 220 , 1º 1ª</td></tr>
<tr><td class="x"></td><td class="k"><span class="c"></span></td><td class="r">202</td><td>Venta, Alquiler</td><td class="r">540,00</td><td class="r">65.000,00</td><td>David Quintas Alcalde</td><td>Fincas Pragma</td><td>Rosich 5 , Primero</td></tr>
<tr><td class="x"></td><td class="k"><span class="c"></span></td><td class="r">203</td><td>Venta</td><td class="r"></td><td class="r">168.000,00</td><td>David Quintas Alcalde</td><td>Fincas Pragma</td><td>Ronda Guinardó 71 , 2-4</td></tr>
<tr><td class="x"></td><td class="k"><span class="c"></span></td><td class="r">204</td><td>Venta</td><td class="r"></td><td class="r">235.000,00</td><td>David Quintas Alcalde</td><td>Fincas Pragma</td><td>Servet 35 , 1-2</td></tr>
<tr><td class="x"></td><td class="k"><span class="c"></span></td><td class="r">205</td><td>Venta</td><td class="r"></td><td class="r">320.000,00</td><td>David Quintas Alcalde</td><td>Fincas Pragma</td><td>Cervantes 16 , Atico</td></tr>
<tr><td class="x"></td><td class="k"><span class="c"></span></td><td class="r">206</td><td>Alquiler</td><td class="r">725,00</td><td class="r"></td><td>Antonio Arroyo Chamorro</td><td>Fincas Pragma</td><td>Castellbell 7 , 1-1</td></tr>
<tr><td class="x"></td><td class="k"><span class="c"></span></td><td class="r">207</td><td>Alquiler</td><td class="r">950,00</td><td class="r"></td><td>David Quintas Alcalde</td><td>Fincas Pragma</td><td>Plaça de les Palmeres 21 , 3-1</td></tr>
</table>
<div class="dot"></div><div class="tri"></div>
</div>
</div>

<div style="position:absolute;left:417px;top:257px;width:155px;height:176px;box-sizing:border-box;border:2px solid #f00"></div>
</body></html>
